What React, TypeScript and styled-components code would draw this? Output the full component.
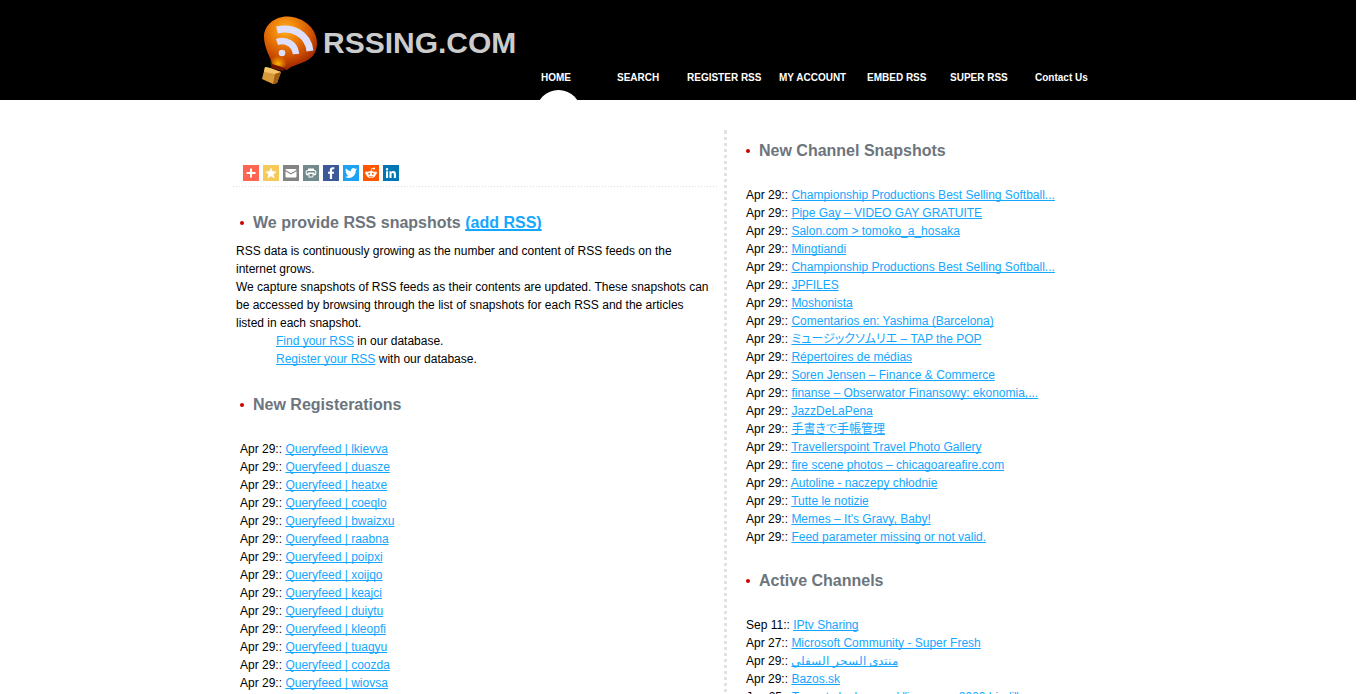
import React from "react";
import styled, { createGlobalStyle } from "styled-components";

const GlobalStyle = createGlobalStyle`
  * { box-sizing: border-box; }
  html { overflow: hidden; }
  body {
    margin: 0;
    padding-right: 10px;
    background: #fff;
    color: #000;
    font: 12px/18px Arial, "Liberation Sans", "Noto Sans CJK JP", sans-serif;
    text-rendering: optimizeSpeed;
  }
`;

const Header = styled.header`
  height: 100px;
  background: #000;
`;

const Container = styled.div`
  width: 100%;
  max-width: 890px;
  margin: 0 auto;
`;

const HeaderInner = styled(Container)`
  height: 100%;
  display: flex;
  align-items: flex-start;
`;

const Brand = styled.a`
  flex: none;
  display: flex;
  gap: 4px;
  width: 301px;
  padding: 14px 0 0 28px;
  color: #ccc;
  font-size: 30px;
  line-height: 58px;
  font-weight: bold;
  text-decoration: none;
`;

const Nav = styled.nav`
  display: flex;
  height: 100%;
  padding-top: 69px;
  margin-right: -8px;
`;

const NavLink = styled.a<{ $width: number; $active?: boolean }>`
  position: relative;
  overflow: hidden;
  flex: none;
  width: ${(p) => p.$width}px;
  padding-left: 7px;
  color: #fff;
  font-size: 10px;
  line-height: 18px;
  font-weight: bold;
  text-decoration: none;
  white-space: nowrap;

  &::after {
    content: "";
    display: ${(p) => (p.$active ? "block" : "none")};
    position: absolute;
    left: 2px;
    top: 21px;
    width: 45px;
    height: 45px;
    border-radius: 50%;
    background: #fff;
  }
`;

const Columns = styled(Container)`
  display: flex;
  padding-top: 30px;
`;

const LeftColumn = styled.main`
  flex: 485;
`;

const Divider = styled.div`
  flex: none;
  margin: 0 19px 0 6px;
  border-left: 3px dotted #e2e2e2;
`;

const RightColumn = styled.aside`
  flex: 377;
  min-width: 0;
`;

const ShareBar = styled.div`
  display: flex;
  gap: 4px;
  padding: 35px 10px 6px;
  background: repeating-linear-gradient(to right, #ddd 0 1px, transparent 1px 3px) bottom / 100% 1px no-repeat;
`;

const ShareButton = styled.button<{ $color: string }>`
  width: 16px;
  height: 16px;
  padding: 0;
  border: 0;
  background: ${(p) => p.$color};

  svg { display: block; }
`;

const Heading = styled.h2<{ $inset?: boolean }>`
  display: flex;
  align-items: center;
  gap: 9px;
  margin: 0;
  padding-left: ${(p) => (p.$inset ? 7 : 0)}px;
  color: #6c757d;
  font-size: 16px;
  line-height: 20px;
  font-weight: bold;

  &::before {
    content: "";
    width: 4px;
    height: 4px;
    border-radius: 50%;
    background: #c00;
  }

  a { text-decoration-thickness: 2px; }
`;

const Link = styled.a`
  color: #14a7ff;
  text-decoration: underline;
  text-decoration-skip-ink: none;

  &:lang(ja) { font-feature-settings: "palt"; }
`;

const Section = styled.section`
  padding-top: 26px;
`;

const FirstSection = styled.section`
  padding: 11px 0 0;

  & + section { padding-top: 25px; }
`;

const Prose = styled.div`
  padding: 9px 5px 1px 3px;

  p { margin: 0; }
  p.indent { padding-left: 40px; }
`;

const List = styled.ul<{ $inset?: boolean }>`
  list-style: none;
  margin: 0;
  padding: 25px 0 0 ${(p) => (p.$inset ? 7 : 0)}px;
  white-space: nowrap;
`;

const NAV = [
  { label: "HOME", width: 76 },
  { label: "SEARCH", width: 70 },
  { label: "REGISTER RSS", width: 92 },
  { label: "MY ACCOUNT", width: 88 },
  { label: "EMBED RSS", width: 83 },
  { label: "SUPER RSS", width: 85 },
  { label: "Contact Us", width: 70 },
];

const REGISTRATIONS = [
  "lkievva", "duasze", "heatxe", "coeqlo", "bwaizxu", "raabna", "poipxi", "xoijqo",
  "keajci", "duiytu", "kleopfi", "tuagyu", "coozda", "wiovsa",
].map((name) => ["Apr 29", `Queryfeed | ${name}`]);

const SNAPSHOTS = [
  ["Championship Productions Best Selling Softball..."],
  ["Pipe Gay – VIDEO GAY GRATUITE"],
  ["Salon.com > tomoko_a_hosaka"],
  ["Mingtiandi"],
  ["Championship Productions Best Selling Softball..."],
  ["JPFILES"],
  ["Moshonista"],
  ["Comentarios en: Yashima (Barcelona)"],
  ["ミュージックソムリエ – TAP the POP", "ja"],
  ["Répertoires de médias"],
  ["Soren Jensen – Finance & Commerce"],
  ["finanse – Obserwator Finansowy: ekonomia,..."],
  ["JazzDeLaPena"],
  ["手書きで手帳管理", "ja"],
  ["Travellerspoint Travel Photo Gallery"],
  ["fire scene photos – chicagoareafire.com"],
  ["Autoline - naczepy chłodnie"],
  ["Tutte le notizie"],
  ["Memes – It's Gravy, Baby!"],
  ["Feed parameter missing or not valid."],
].map((entry) => ["Apr 29", ...entry]);

const ACTIVE = [
  ["Sep 11", "IPtv Sharing"],
  ["Apr 27", "Microsoft Community - Super Fresh"],
  ["Apr 29", "منتدى السحر السفلي"],
  ["Apr 29", "Bazos.sk"],
  ["Jun 25", "Torrents by keyword \"japanese 2020 hindi\""],
];

const SHARE = [
  { name: "Share", color: "#ff6550", art: <path d="M14 7h4v7h7v4h-7v7h-4v-7H7v-4h7z" /> },
  { name: "Favorites", color: "#f5ca59", art: <path d="M16 5l3.2 7.6 8.3.7-6.3 5.4 1.9 8.1L16 22.500l-7.100 4.300 1.900-8.100-6.300-5.400 8.300-.7z" /> },
  {
    name: "Email", color: "#848484",
    art: <><path d="M27 22.800V12.600l-9.400 5.600q-1.600.8-3.200 0L5 12.600v10.200Q5 25 7.200 25h17.600Q27 25 27 22.800z" /><path d="M27 9.200Q27 8 25 8H7Q5 8 5 9.200v.8l9.500 5.700q1.500.8 3 0L27 10z" /></>,
  },
  {
    name: "Print", color: "#738a8d",
    art: <><path d="M10 7h12v3H10z" /><path d="M8 11h16l2 3-1 5-3 1v-4H10v4l-3-1-1-5z" fill="none" stroke="#fff" strokeWidth="2.200" strokeLinejoin="round" /><path d="M11 16h10v7l-2 2h-8zm2 2v5h6v-5z" fillRule="evenodd" /></>,
  },
  { name: "Facebook", color: "#3b5998", art: <path d="M13.700 28V17.500H10v-4h3.700v-3.300C13.700 6.400 16 4.500 19.400 4.500q2 0 3.100.2v3.700h-2.100c-1.800 0-2.200.9-2.200 2.200v2.900h4.100l-.6 4h-3.500V28z" /> },
  { name: "Twitter", color: "#1da1f2", art: <path d="M28 8.600a9.900 9.900 0 0 1-2.800.8 4.900 4.900 0 0 0 2.100-2.700c-1 .5-2 1-3.100 1.200a4.900 4.900 0 0 0-8.400 4.500A14 14 0 0 1 5.700 7.200a4.900 4.900 0 0 0 1.500 6.600 5 5 0 0 1-2.200-.6c0 2.400 1.700 4.400 4 4.900a5 5 0 0 1-2.300.1 4.900 4.900 0 0 0 4.600 3.400A9.900 9.900 0 0 1 4 23.600 14 14 0 0 0 25.500 11.100 10 10 0 0 0 28 8.600z" /> },
  {
    name: "Reddit", color: "#ff5700",
    art: <><ellipse cx="16" cy="19" rx="9.500" ry="7" /><circle cx="7" cy="16" r="2.800" /><circle cx="25" cy="16" r="2.800" /><circle cx="22" cy="7" r="2.200" /><path d="M16 13l1.500-6.500 4 1" fill="none" stroke="#fff" strokeWidth="1.500" /><g fill="#ff5700"><circle cx="12.500" cy="17.500" r="1.900" /><circle cx="19.500" cy="17.500" r="1.900" /><path d="M11.500 21.500q4.500 2.500 9 0-1.500 3.300-4.500 3.300t-4.500-3.300z" /></g></>,
  },
  { name: "LinkedIn", color: "#0077b5", art: <path d="M6 12.600h4.200V26H6zM8.100 6a2.400 2.400 0 1 1 0 4.800 2.400 2.400 0 0 1 0-4.800zM12.900 12.600h4v1.800c.6-1 1.900-2.200 4-2.200 4.200 0 5 2.800 5 6.400V26h-4.100v-6.500c0-1.600 0-3.600-2.200-3.600s-2.500 1.700-2.500 3.400V26h-4.200z" /> },
];

function BalloonLogo() {
  return (
    <svg width="58" height="72" viewBox="0 0 58 72" aria-hidden="true">
      <defs>
        <radialGradient id="skin" cx="0.400" cy="0.250" r="0.750">
          <stop offset="0" stopColor="#ffae20" />
          <stop offset="0.350" stopColor="#ec7e08" />
          <stop offset="0.700" stopColor="#cc4c00" />
          <stop offset="1" stopColor="#982400" />
        </radialGradient>
        <radialGradient id="glow" cx="0.450" cy="0.600" r="0.500">
          <stop offset="0" stopColor="#ffb400" />
          <stop offset="1" stopColor="#ffb400" stopOpacity="0" />
        </radialGradient>
      </defs>
      <path d="M3 23C3 11 14 2 27 2.500 43 3 56 15 56 29c0 11-6 16-13 19-7 3-13 4-17 8l-14-4C10 44 3 34 3 23z" fill="url(#skin)" />
      <ellipse cx="18" cy="48" rx="9" ry="8" fill="url(#glow)" />
      <path d="M11 50l13 4-2 3-12-3z" fill="#701400" />
      <path d="M4 53l5 1 11 4-4 11-4 1L1 65z" fill="#d99b39" />
      <path d="M4 53l5 1 11 4-6 2-11-2z" fill="#f4c568" />
      <path d="M14 60l6-2-4 11-4 1z" fill="#a35f13" />
      <g fill="none" stroke="#dedeff">
        <path d="M16 16C31 12 47 20 49 37" strokeWidth="7" />
        <path d="M16 28C25 25 34 30 35 40" strokeWidth="6.500" />
      </g>
      <circle cx="21" cy="39" r="3.300" fill="#dedeff" />
    </svg>
  );
}

function Entries({ items, inset }: { items: string[][]; inset?: boolean }) {
  return (
    <List $inset={inset}>
      {items.map(([date, title, lang], i) => (
        <li key={i}>
          {date}:: <Link href="#" lang={lang}>{title}</Link>
        </li>
      ))}
    </List>
  );
}

export default function App() {
  return (
    <>
      <GlobalStyle />
      <Header>
        <HeaderInner>
          <Brand href="#">
            <BalloonLogo />
            RSSING.COM
          </Brand>
          <Nav>
            {NAV.map((item, i) => (
              <NavLink key={item.label} href="#" $width={item.width} $active={i === 0}>
                {item.label}
              </NavLink>
            ))}
          </Nav>
        </HeaderInner>
      </Header>
      <Columns>
        <LeftColumn>
          <ShareBar>
            {SHARE.map((s) => (
              <ShareButton key={s.name} $color={s.color} aria-label={s.name}>
                <svg width="16" height="16" viewBox="0 0 32 32" fill="#fff">{s.art}</svg>
              </ShareButton>
            ))}
          </ShareBar>
          <Section>
            <Heading $inset>
              <span>
                We provide RSS snapshots <Link href="#">(add RSS)</Link>
              </span>
            </Heading>
            <Prose>
              <p>RSS data is continuously growing as the number and content of RSS feeds on the internet grows.</p>
              <p>
                We capture snapshots of RSS feeds as their contents are updated. These snapshots can be accessed by
                browsing through the list of snapshots for each RSS and the articles listed in each snapshot.
              </p>
              <p className="indent"><Link href="#">Find your RSS</Link> in our database.</p>
              <p className="indent"><Link href="#">Register your RSS</Link> with our database.</p>
            </Prose>
          </Section>
          <Section>
            <Heading $inset>New Registerations</Heading>
            <Entries items={REGISTRATIONS} inset />
          </Section>
        </LeftColumn>
        <Divider />
        <RightColumn>
          <FirstSection>
            <Heading>New Channel Snapshots</Heading>
            <Entries items={SNAPSHOTS} />
          </FirstSection>
          <Section>
            <Heading>Active Channels</Heading>
            <Entries items={ACTIVE} />
          </Section>
        </RightColumn>
      </Columns>
    </>
  );
}
